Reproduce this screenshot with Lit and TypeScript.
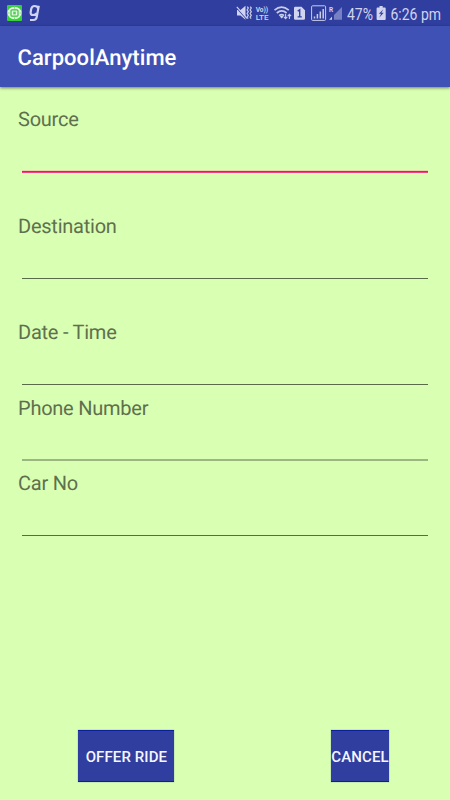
import { LitElement, html, css, svg } from "lit";
import { customElement, property } from "lit/decorators.js";
import { classMap } from "lit/directives/class-map.js";

@customElement("status-bar")
class StatusBar extends LitElement {
  static styles = css`
    :host { display: block; height: 26px; background: #303f9f; }
    svg { display: block; overflow: visible; font-family: Roboto, sans-serif; }
    .ink { fill: #d0d4ee; }
    .line { fill: none; stroke: #c8cce8; }
    .time { font-size: 17px; fill: #d0d4ee; }
    .tiny { font-weight: 700; fill: #d0d4ee; }
  `;
  render() {
    return html`<svg width="450" height="26" viewBox="0 0 450 26">
      ${svg`
      <rect x="7" y="5" width="15" height="16" rx="1" fill="#36d136"/>
      <ellipse cx="14.5" cy="13" rx="7" ry="6.2" fill="#e3f8e3"/>
      <rect x="11" y="9.8" width="7" height="6.4" rx="1" fill="none" stroke="#38c438" stroke-width="1.2"/>
      <rect x="13.2" y="11.6" width="2.6" height="2.8" fill="#55cf55"/>
      <path d="M14.5 6.7v2M14.5 17.3v2M7.6 13h2M19.4 13h2" stroke="#6ad66a" stroke-width=".8"/>
      <path d="M38.8 5.7 36.7 17.1Q36.2 20 33.4 20H30M38.2 8.5Q37.4 6 34.6 6 31.8 6 31.2 9L30.7 12Q30.2 15 33 15 35.8 15 36.9 13" fill="none" stroke="#d0d4ee" stroke-width="2.2"/>
      <path class="ink" d="M237 10h3.5l5-4.2v14l-5-4.2H237z"/>
      <path d="M235.9 6.9 246.5 18.9" stroke="#303f9f" stroke-width="1.4"/>
      <path d="M236.8 6.8 247 18.4" stroke="#d0d4ee" stroke-width="1.2"/>
      <path class="line" stroke-width="1.2" d="m247.3 6.7 1 1.4-1.2 1.8 1.2 1.8-1.2 1.8 1.2 1.8-1.2 1.8 1 1.5M250.3 6.7l1 1.4-1.2 1.8 1.2 1.8-1.2 1.8 1.2 1.8-1.2 1.8 1 1.5"/>
      <text class="tiny" x="255.7" y="11.5" font-size="6.5" textLength="12.5" lengthAdjust="spacingAndGlyphs">Vo))</text>
      <text class="ink" x="255.7" y="19.8" font-size="8" font-weight="500" textLength="12.8" lengthAdjust="spacingAndGlyphs">LTE</text>
      <path class="line" stroke-width="1.7" d="M274.5 10.2Q281.5 4.2 288.8 10.2M276.8 13Q281.7 8.8 286.6 13M279.2 15.6Q281.6 13.5 284 15.6"/>
      <path class="ink" d="m279.8 16.4 1.9 2 1.9-2q-1.9-1.4-3.8 0z"/>
      <path class="line" stroke-width="1.1" d="M285.6 14v4.5m-1.7-1.7 1.7 1.8 1.7-1.8M289.4 19v-4.7m-1.7 1.8 1.7-1.8 1.7 1.8"/>
      <path class="ink" d="M294 8q0-1.3 1.3-1.3h6.2l3.5 3.5v8.3q0 1.2-1.3 1.2h-8.4q-1.3 0-1.3-1.2z"/>
      <path d="m297.7 11.2 2-1.3v7m-2.1 0h4.2" fill="none" stroke="#303f9f" stroke-width="1.4"/>
      <rect class="line" x="311.6" y="5.8" width="14" height="14.6" rx="1"/>
      <path d="M314.5 18.5v-2M317.4 18.5v-4.4M320.3 18.5v-6.9M323.2 18.5V9" stroke="#c8cce8" stroke-width="1.5"/>
      <text class="tiny" x="329" y="11.9" font-size="6.5">R</text>
      <path d="M342 7v12.8h-8V15z" fill="#7681c3"/>
      <path class="ink" d="M332 16.7v3h-3z"/>
      <text class="time" x="347" y="19.5" textLength="26" lengthAdjust="spacingAndGlyphs">47%</text>
      <path class="ink" d="M379.5 6h3.2v1.5h2.1q.9 0 .9.9v10.6q0 .9-.9.9h-7.3q-.9 0-.9-.9V8.4q0-.9.9-.9h2z"/>
      <path d="m383.4 9.3-4.6 4.5h2.3l-1.9 4 4.5-5h-2.3z" fill="#303f9f"/>
      <text class="time" x="390.5" y="19.5" textLength="50.5" lengthAdjust="spacingAndGlyphs">6:26 pm</text>
      `}
    </svg>`;
  }
}

@customElement("form-field")
class FormField extends LitElement {
  @property() label = "";
  @property({ type: Boolean }) active = false;
  @property({ type: Boolean }) soft = false;
  static styles = css`
    :host { display: block; height: 65px; }
    .field { height: 100%; display: flex; flex-direction: column; justify-content: space-between; }
    .label { font-size: 20px; line-height: 24px; color: #5f704e; letter-spacing: -0.24px; text-rendering: geometricPrecision; }
    .line { height: 1px; margin: 0 4px; background: #5a6b49; }
    .soft { height: 2px; background: #9cb681; }
    .focused { height: 2px; background: linear-gradient(#ff0a70 50%, #f83e85 50%); box-shadow: 0 -1px #e6d7ad; }
  `;
  render() {
    return html`<div class="field">
      <div class="label">${this.label}</div>
      <div class=${classMap({ line: true, focused: this.active, soft: this.soft })}></div>
    </div>`;
  }
}

@customElement("app-root")
class AppRoot extends LitElement {
  static styles = css`
    :host { display: flex; flex-direction: column; height: 800px; background: #d9ffb3; font-family: Roboto, sans-serif; }
    .bar { height: 61px; flex: none; display: flex; align-items: center; padding: 4px 17.5px 0; box-sizing: border-box;
      background: #3f51b5; color: #fff; font-size: 22px; font-weight: 500; letter-spacing: 0.05px; text-rendering: geometricPrecision;
      box-shadow: 0 1px 3px rgba(0, 0, 0, 0.5); }
    .form { display: flex; flex-direction: column; padding: 20px 18px 0 18px; }
    .wide { margin-bottom: 41px; }
    .first { height: 66px; }
    .tight { margin-bottom: 11px; }
    .tighter { margin-bottom: 10px; }
    .actions { margin-top: auto; padding: 0 61px 18px 78.4px; display: flex; justify-content: space-between; }
    button { height: 52px; padding: 2px 0 0; border: 0; background: #303f9f; color: #f5f6ff; font: 500 15px Roboto, sans-serif;
      letter-spacing: 0.1px; border-top: 1px solid #0d1da0; border-bottom: 1px solid #0d1da0; white-space: nowrap;
      box-shadow: 0 0 1px rgba(48, 63, 159, 0.6); }
    .offer { width: 96px; }
    .cancel { width: 58px; }
  `;
  render() {
    return html`
      <status-bar></status-bar>
      <div class="bar">CarpoolAnytime</div>
      <div class="form">
        <form-field class="wide first" label="Source" active></form-field>
        <form-field class="wide" label="Destination"></form-field>
        <form-field class="tight" label="Date - Time"></form-field>
        <form-field class="tighter" label="Phone Number" soft></form-field>
        <form-field label="Car No"></form-field>
      </div>
      <div class="actions">
        <button class="offer">OFFER RIDE</button>
        <button class="cancel">CANCEL</button>
      </div>
    `;
  }
}
